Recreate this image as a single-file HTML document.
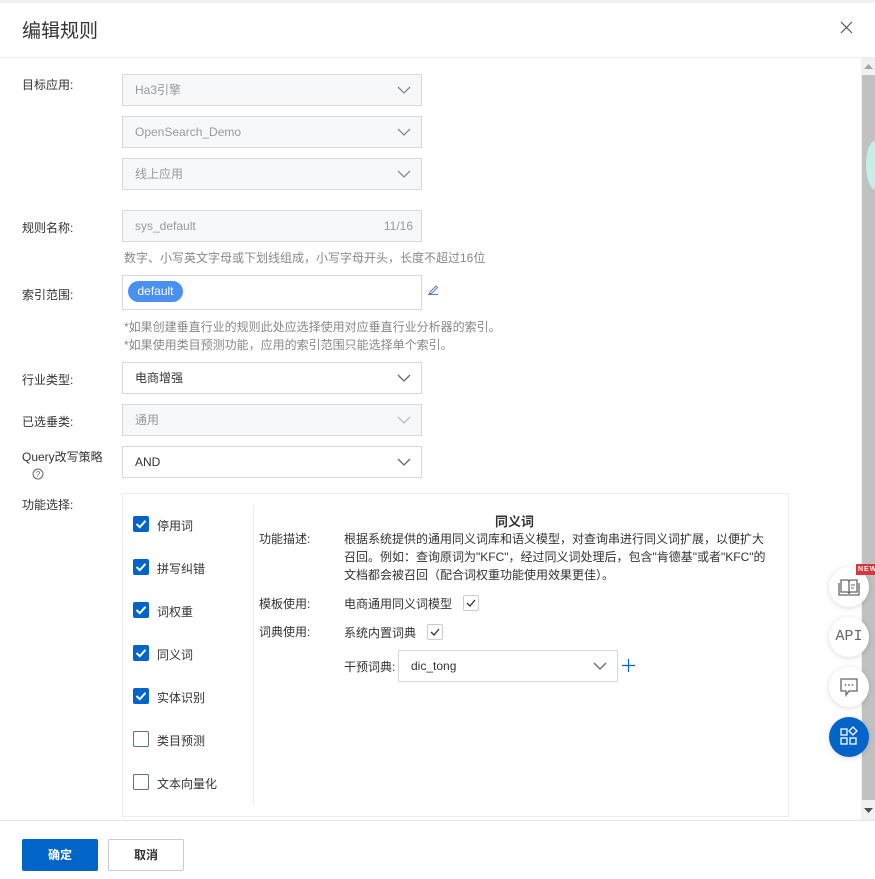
<!DOCTYPE html>
<html><head><meta charset="utf-8"><style>
*{box-sizing:border-box;margin:0;padding:0}
body{width:875px;height:879px;position:relative;overflow:hidden;background:#fff;font-family:"Liberation Sans","Noto Sans CJK SC",sans-serif;font-size:12px;color:#333}
.a{position:absolute}
.lbl{position:absolute;left:22px;font-size:12px;color:#333}
.sel{position:absolute;left:122px;width:300px;height:32px;border:1px solid #d7d8d9;background:#f7f8fa;color:#999;font-size:12px;line-height:30px;padding-left:12px}
.sel.w{background:#fff;color:#333}
.chev{position:absolute;right:10px;top:8px;width:14px;height:14px}
.hint{position:absolute;left:124px;color:#888;font-size:12px}
.cb{position:absolute;left:133px;width:16px;height:16px;border-radius:2px}
.cb.on{background:#0064c8}
.cb.off{border:1px solid #5d7088;background:#fff}
.cbl{position:absolute;left:157px;font-size:12px;color:#333}
.sc{position:absolute;width:16px;height:16px;border:1px solid #ccc;border-radius:2px;background:#fff}
.fab{position:absolute;left:829px;width:40px;height:40px;border-radius:50%;background:#fff;box-shadow:0 1px 6px rgba(0,0,0,.15)}
</style></head><body>
<div class="a" style="left:0;top:0;width:875px;height:3px;background:#f0f0f0"></div>
<div class="a" style="left:22px;top:16px;font-size:19px;color:#333">编辑规则</div>
<svg class="a" style="left:840px;top:21px" width="13" height="13"><path d="M1 1L12 12M12 1L1 12" stroke="#555" stroke-width="1.2"/></svg>
<div class="a" style="left:0;top:57px;width:875px;height:1px;background:#ececec"></div>

<!-- scrollbar -->
<div class="a" style="left:861px;top:58px;width:14px;height:762px;background:#f1f1f1"></div>
<div class="a" style="left:862px;top:75px;width:13px;height:725px;background:#c1c1c1"></div>
<svg class="a" style="left:864px;top:64px" width="9" height="6"><path d="M0 5L4.5 0L9 5Z" fill="#a3a3a3"/></svg>
<svg class="a" style="left:864px;top:808px" width="9" height="6"><path d="M0 0L4.5 5L9 0Z" fill="#505050"/></svg>
<div class="a" style="left:866px;top:140px;width:20px;height:50px;border-radius:50%;background:#c4efe8"></div>

<div class="lbl" style="top:76px">目标应用:</div>
<div class="sel" style="top:74px">Ha3引擎<svg class="chev"><path d="M1 4L7 10L13 4" fill="none" stroke="#888" stroke-width="1.3"/></svg></div>
<div class="sel" style="top:116px">OpenSearch_Demo<svg class="chev"><path d="M1 4L7 10L13 4" fill="none" stroke="#888" stroke-width="1.3"/></svg></div>
<div class="sel" style="top:158px">线上应用<svg class="chev"><path d="M1 4L7 10L13 4" fill="none" stroke="#888" stroke-width="1.3"/></svg></div>

<div class="lbl" style="top:219px">规则名称:</div>
<div class="sel" style="top:210px">sys_default<span style="position:absolute;right:8px;color:#999">11/16</span></div>
<div class="hint" style="top:249px">数字、小写英文字母或下划线组成，小写字母开头，长度不超过16位</div>

<div class="lbl" style="top:286px">索引范围:</div>
<div class="a" style="left:122px;top:275px;width:300px;height:35px;border:1px solid #d7d8d9"></div>
<div class="a" style="left:128px;top:281px;width:55px;height:21px;border-radius:11px;background:#4a90f0;color:#fff;font-size:12px;line-height:21px;text-align:center">default</div>
<svg class="a" style="left:428px;top:284px" width="11" height="11"><path d="M2 8L8 2L9.5 3.5L3.5 9.5L1.5 9.5Z M0 10.5H10" fill="none" stroke="#5a7ac8" stroke-width="1"/></svg>
<div class="hint" style="top:318px">*如果创建垂直行业的规则此处应选择使用对应垂直行业分析器的索引。</div>
<div class="hint" style="top:336px">*如果使用类目预测功能，应用的索引范围只能选择单个索引。</div>

<div class="lbl" style="top:371px">行业类型:</div>
<div class="sel w" style="top:362px">电商增强<svg class="chev"><path d="M1 4L7 10L13 4" fill="none" stroke="#666" stroke-width="1.3"/></svg></div>
<div class="lbl" style="top:413px">已选垂类:</div>
<div class="sel" style="top:404px">通用<svg class="chev"><path d="M1 4L7 10L13 4" fill="none" stroke="#bbb" stroke-width="1.3"/></svg></div>
<div class="lbl" style="top:448px">Query改写策略</div>
<svg class="a" style="left:32px;top:468px" width="12" height="12"><circle cx="6" cy="6" r="5" fill="none" stroke="#666"/><text x="6" y="9" font-size="8" text-anchor="middle" fill="#666" font-family="Liberation Sans">?</text></svg>
<div class="sel w" style="top:446px">AND<svg class="chev"><path d="M1 4L7 10L13 4" fill="none" stroke="#666" stroke-width="1.3"/></svg></div>

<div class="lbl" style="top:496px">功能选择:</div>
<div class="a" style="left:122px;top:493px;width:667px;height:324px;border:1px solid #ececec"></div>
<div class="a" style="left:253px;top:505px;width:1px;height:300px;background:#ececec"></div>

<svg width="0" height="0" style="position:absolute"><defs><path id="ck" d="M3.5 8L6.8 11.2L12.5 4.8" fill="none" stroke="#fff" stroke-width="2"/></defs></svg>
<div class="cb on" style="top:516px"><svg width="16" height="16"><use href="#ck"/></svg></div><div class="cbl" style="top:517px">停用词</div>
<div class="cb on" style="top:559px"><svg width="16" height="16"><use href="#ck"/></svg></div><div class="cbl" style="top:560px">拼写纠错</div>
<div class="cb on" style="top:602px"><svg width="16" height="16"><use href="#ck"/></svg></div><div class="cbl" style="top:603px">词权重</div>
<div class="cb on" style="top:645px"><svg width="16" height="16"><use href="#ck"/></svg></div><div class="cbl" style="top:646px">同义词</div>
<div class="cb on" style="top:688px"><svg width="16" height="16"><use href="#ck"/></svg></div><div class="cbl" style="top:689px">实体识别</div>
<div class="cb off" style="top:731px"></div><div class="cbl" style="top:732px">类目预测</div>
<div class="cb off" style="top:774px"></div><div class="cbl" style="top:775px">文本向量化</div>

<div class="a" style="left:495px;top:511px;font-size:13px;font-weight:bold;color:#333">同义词</div>
<div class="a" style="left:259px;top:530px">功能描述:</div>
<div class="a" style="left:344px;top:530px;width:430px;line-height:18px">根据系统提供的通用同义词库和语义模型，对查询串进行同义词扩展，以便扩大召回。例如：查询原词为"KFC"，经过同义词处理后，包含"肯德基"或者"KFC"的文档都会被召回（配合词权重功能使用效果更佳）。</div>
<div class="a" style="left:259px;top:595px">模板使用:</div>
<div class="a" style="left:344px;top:595px">电商通用同义词模型</div>
<div class="sc" style="left:463px;top:595px"><svg width="14" height="14"><path d="M3 7L6 10L11 4" fill="none" stroke="#333" stroke-width="1.3"/></svg></div>
<div class="a" style="left:259px;top:623px">词典使用:</div>
<div class="a" style="left:344px;top:624px">系统内置词典</div>
<div class="sc" style="left:427px;top:624px"><svg width="14" height="14"><path d="M3 7L6 10L11 4" fill="none" stroke="#333" stroke-width="1.3"/></svg></div>
<div class="a" style="left:344px;top:658px">干预词典:</div>
<div class="sel w" style="left:398px;top:650px;width:220px">dic_tong<svg class="chev"><path d="M1 4L7 10L13 4" fill="none" stroke="#666" stroke-width="1.3"/></svg></div>
<svg class="a" style="left:622px;top:659px" width="13" height="13"><path d="M6.5 0V13M0 6.5H13" stroke="#0064c8" stroke-width="1.2"/></svg>

<!-- fabs -->
<div class="fab" style="top:567px"><svg width="40" height="40"><path d="M12 13H18Q20 13 20 15V27Q20 25 18 25H12Z M28 13H22Q20 13 20 15V27Q20 25 22 25H28Z M10 16V28H30V16" fill="none" stroke="#666" stroke-width="1.3"/><path d="M22 18H26M22 21H25" stroke="#666"/></svg></div>
<div class="a" style="left:856px;top:564px;width:19px;height:11px;background:#d9363e;color:#fff;font-size:7px;font-weight:bold;line-height:11px;padding-left:2px;letter-spacing:1px">NEW</div>
<div class="fab" style="top:617px"><div style="text-align:center;line-height:40px;font-size:15px;color:#666;font-family:'Liberation Mono',monospace">API</div></div>
<div class="fab" style="top:667px"><svg width="40" height="40"><path d="M12 12H28V24H20L17 28V24H12Z" fill="none" stroke="#666" stroke-width="1.3"/><circle cx="16.5" cy="18" r=".9" fill="#666"/><circle cx="20" cy="18" r=".9" fill="#666"/><circle cx="23.5" cy="18" r=".9" fill="#666"/></svg></div>
<div class="fab" style="top:717px;background:#0064c8"><svg width="40" height="40"><rect x="12" y="12" width="6" height="6" fill="none" stroke="#fff" stroke-width="1.3"/><rect x="12" y="21" width="6" height="6" fill="none" stroke="#fff" stroke-width="1.3"/><rect x="21" y="21" width="6" height="6" fill="none" stroke="#fff" stroke-width="1.3"/><path d="M24 10L28 14L24 18L20 14Z" fill="none" stroke="#fff" stroke-width="1.3"/></svg></div>

<!-- footer -->
<div class="a" style="left:0;top:820px;width:875px;height:1px;background:#e5e5e5"></div>
<div class="a" style="left:22px;top:839px;width:76px;height:32px;background:#0064c8;border-radius:2px;color:#fff;font-weight:bold;text-align:center;line-height:32px">确定</div>
<div class="a" style="left:108px;top:839px;width:76px;height:32px;border:1px solid #c8ccd1;border-radius:2px;color:#333;font-weight:bold;text-align:center;line-height:30px">取消</div>
</body></html>
